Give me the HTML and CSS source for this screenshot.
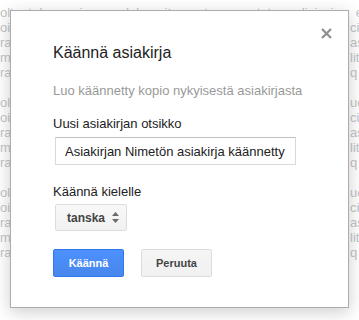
FILE: index.html
```html
<!DOCTYPE html>
<html lang="fi">
<head>
  <meta charset="UTF-8">
  <title>Käännä asiakirja</title>
  <link rel="stylesheet" href="styles.css">
</head>
<body>

  <div class="doc">
    <div class="para">
      <div class="ln top">oltpat lorem ipsum dolor sit amet consectetur adipiscing elit sed uc</div>
      <div class="ln"><span>oi</span><span class="r">ci</span></div>
      <div class="ln"><span>ra</span><span class="r">as</span></div>
      <div class="ln"><span>m</span><span class="r">lit</span></div>
      <div class="ln"><span>ra</span><span class="r">q</span></div>
    </div>
    <div class="para">
      <div class="ln"><span>olu</span><span class="r">uc</span></div>
      <div class="ln"><span>oi</span><span class="r">ci</span></div>
      <div class="ln"><span>ra</span><span class="r">as</span></div>
      <div class="ln"><span>m</span><span class="r">lit</span></div>
      <div class="ln"><span>ra</span><span class="r">q</span></div>
    </div>
    <div class="para">
      <div class="ln"><span>olu</span><span class="r">uc</span></div>
      <div class="ln"><span>oi</span><span class="r">ci</span></div>
      <div class="ln"><span>ra</span><span class="r">as</span></div>
      <div class="ln"><span>m</span><span class="r">lit</span></div>
      <div class="ln"><span>ra</span><span class="r">q</span></div>
    </div>
  </div>

  <div class="dialog">
    <button class="close" title="Sulje">
      <svg width="11" height="11" viewBox="0 0 11 11">
        <path d="M1 1 L10 10 M10 1 L1 10" stroke="#8e8e8e" stroke-width="2.2" fill="none"/>
      </svg>
    </button>

    <div class="title">Käännä asiakirja</div>
    <div class="desc">Luo käännetty kopio nykyisestä asiakirjasta</div>

    <div class="label label-first">Uusi asiakirjan otsikko</div>
    <input class="field" type="text" value="Asiakirjan Nimetön asiakirja käännetty">

    <div class="label label-lang">Käännä kielelle</div>
    <div class="select">
      <span>tanska</span>
      <svg width="7" height="11" viewBox="0 0 7 11">
        <path d="M3.5 0 L7 4 L0 4 Z M0 7 L7 7 L3.5 11 Z" fill="#6a6a6a"/>
      </svg>
    </div>

    <div class="buttons">
      <button class="btn btn-blue">Käännä</button>
      <button class="btn btn-grey">Peruuta</button>
    </div>
  </div>

</body>
</html>
```

FILE: styles.css
```css
body {
  margin: 0;
  font-family: "Liberation Sans", Arial, sans-serif;
  background: #fff;
  overflow: hidden;
}

/* faded document behind the dialog */
.doc {
  padding-top: 5px;
  color: #c4c4c4;
  font-size: 13px;
  line-height: 15px;
}

.para {
  margin-bottom: 15px;
}

.ln {
  display: flex;
  white-space: nowrap;
}

.ln.top {
  display: block;
  word-spacing: 4px;
  overflow: hidden;
}

.ln .r {
  margin-left: auto;
  width: 9px;
  overflow: hidden;
}

.dialog {
  position: absolute;
  left: 10px;
  top: 10px;
  width: 339px;
  height: 298px;
  box-sizing: border-box;
  background: #fff;
  border: 1px solid #acacac;
  box-shadow: 0 4px 16px rgba(0,0,0,0.2);
  padding: 32px 42px 0 42px;
}

.close {
  position: absolute;
  left: 310px;
  top: 17px;
  padding: 0;
  border: none;
  background: none;
  width: 11px;
  height: 11px;
  cursor: pointer;
}

.close svg {
  display: block;
}

.title {
  font-size: 16px;
  line-height: 20px;
  color: #222;
}

.desc {
  margin-top: 20px;
  font-size: 13px;
  line-height: 16px;
  color: #999;
}

.label {
  font-size: 13px;
  line-height: 16px;
  color: #222;
}

.label-first {
  margin-top: 17px;
}

.label-lang {
  margin-top: 19px;
}

.field {
  display: block;
  margin: 5px 0 0 2px;
  width: 241px;
  height: 28px;
  box-sizing: border-box;
  padding: 0 0 0 9px;
  border: 1px solid #d9d9d9;
  border-top-color: #c0c0c0;
  border-radius: 1px;
  font-family: inherit;
  font-size: 13px;
  color: #222;
}

.select {
  margin: 4px 0 0 2px;
  width: 72px;
  height: 27px;
  box-sizing: border-box;
  display: flex;
  align-items: center;
  justify-content: space-between;
  padding: 0 7px 0 11px;
  border: 1px solid #dcdcdc;
  border-radius: 2px;
  background: linear-gradient(#f8f8f8, #f1f1f1);
  font-size: 12px;
  font-weight: bold;
  color: #444;
}

.select svg {
  display: block;
}

.buttons {
  margin-top: 18px;
  display: flex;
  gap: 17px;
}

.btn {
  width: 71px;
  height: 28px;
  box-sizing: border-box;
  border-radius: 2px;
  font-family: inherit;
  font-size: 11px;
  font-weight: bold;
  padding: 0;
  cursor: pointer;
}

.btn-blue {
  color: #fff;
  background: linear-gradient(#4d90fe, #4787ed);
  border: 1px solid #3079ed;
}

.btn-grey {
  color: #444;
  background: linear-gradient(#f5f5f5, #f1f1f1);
  border: 1px solid #dcdcdc;
}
```
